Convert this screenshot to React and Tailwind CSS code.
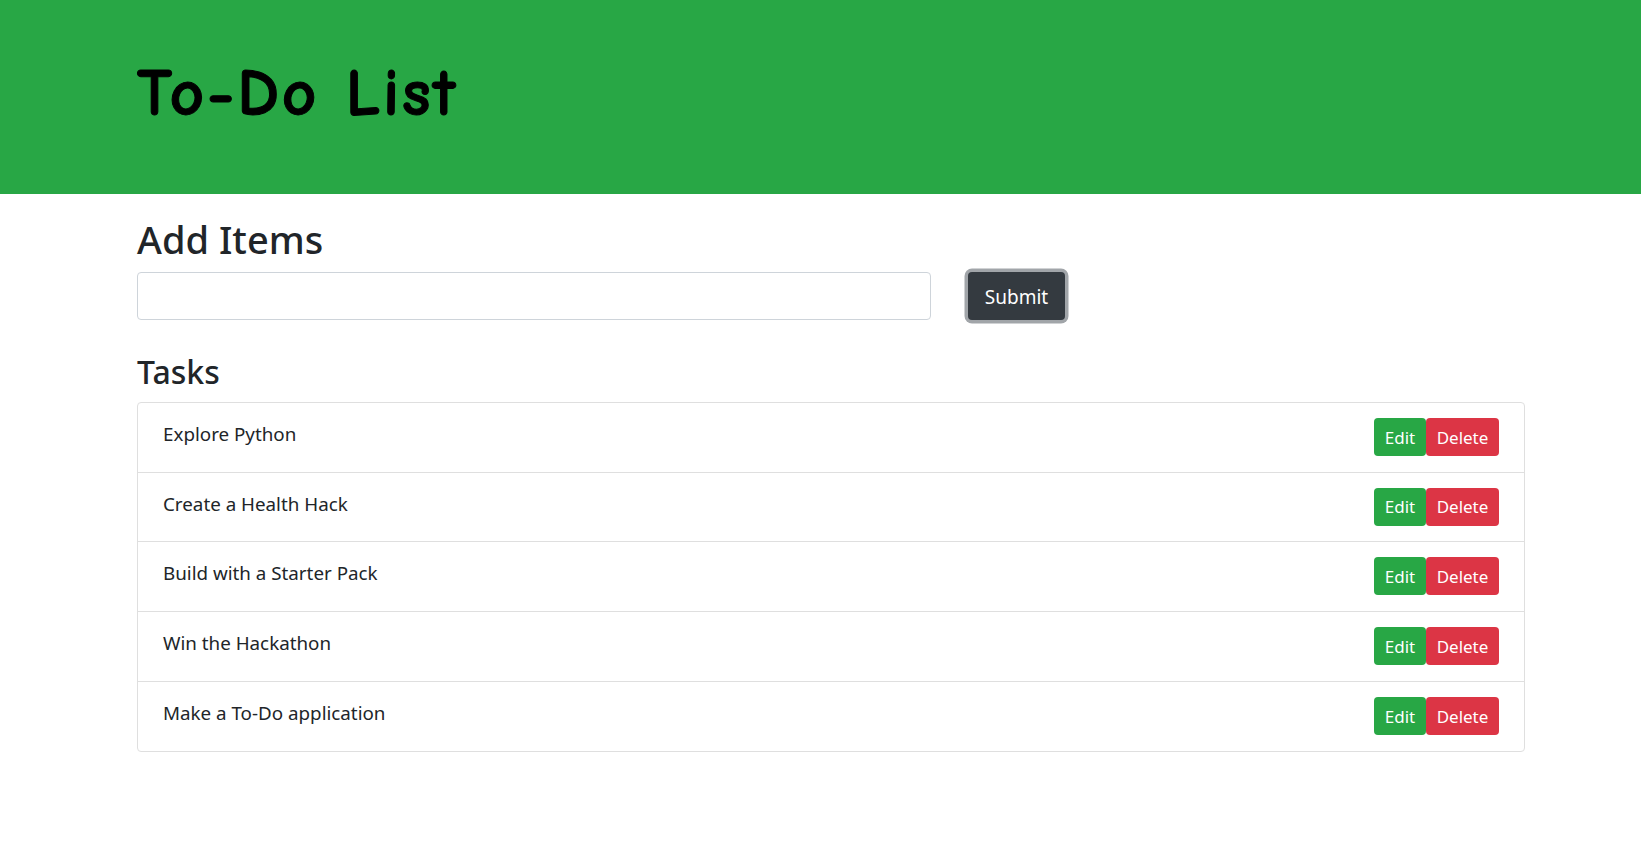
const tasks = ["Explore Python", "Create a Health Hack", "Build with a Starter Pack", "Win the Hackathon", "Make a To-Do application"];

export default function App() {
  return (
    <div className="min-h-[852px] bg-white text-[#212529] font-['Noto_Sans','Open_Sans',sans-serif]">
      <header className="h-[194px] bg-[#28a745] pl-[137px] pt-[52px]">
        <h1 className="m-0 text-[67px] leading-[84px] font-bold tracking-[2.8px] text-black [-webkit-text-stroke:1px_black] font-['Comic_Sans_MS','Comic_Neue',cursive]">To-Do List</h1>
      </header>
      <main className="w-[1388px] ml-[137px]">
        <h2 className="mt-[21px] text-[38px] leading-[48px] font-medium">Add Items</h2>
        <form className="mt-[9px] flex items-center">
          <input aria-label="New item" className="h-[48px] w-[794px] rounded border border-[#ced4da] bg-white" />
          <button type="button" className="ml-[37px] h-[48px] w-[97px] rounded bg-[#343a40] pt-[2px] text-[19px] text-white ring-[3.5px] ring-[#a1a5a9]">Submit</button>
        </form>
        <h3 className="mt-[30px] text-[32px] leading-[44px] font-medium">Tasks</h3>
        <ul className="mt-[8px] rounded border border-[#dfdfdf] divide-y divide-[#dfdfdf]">
          {tasks.map((t) => (
            <li key={t} className="flex h-[69.7px] items-start justify-between px-[25px] pt-[15px]">
              <span className="mt-[2px] text-[18.8px] leading-[28px] text-[#212529]">{t}</span>
              <span className="flex">
                <button type="button" className="h-[38px] w-[52px] rounded bg-[#28a745] pt-[1px] text-[17px] text-white">Edit</button>
                <button type="button" className="h-[38px] w-[73px] rounded bg-[#dc3545] pt-[1px] text-[17px] text-white">Delete</button>
              </span>
            </li>
          ))}
        </ul>
      </main>
    </div>
  );
}
